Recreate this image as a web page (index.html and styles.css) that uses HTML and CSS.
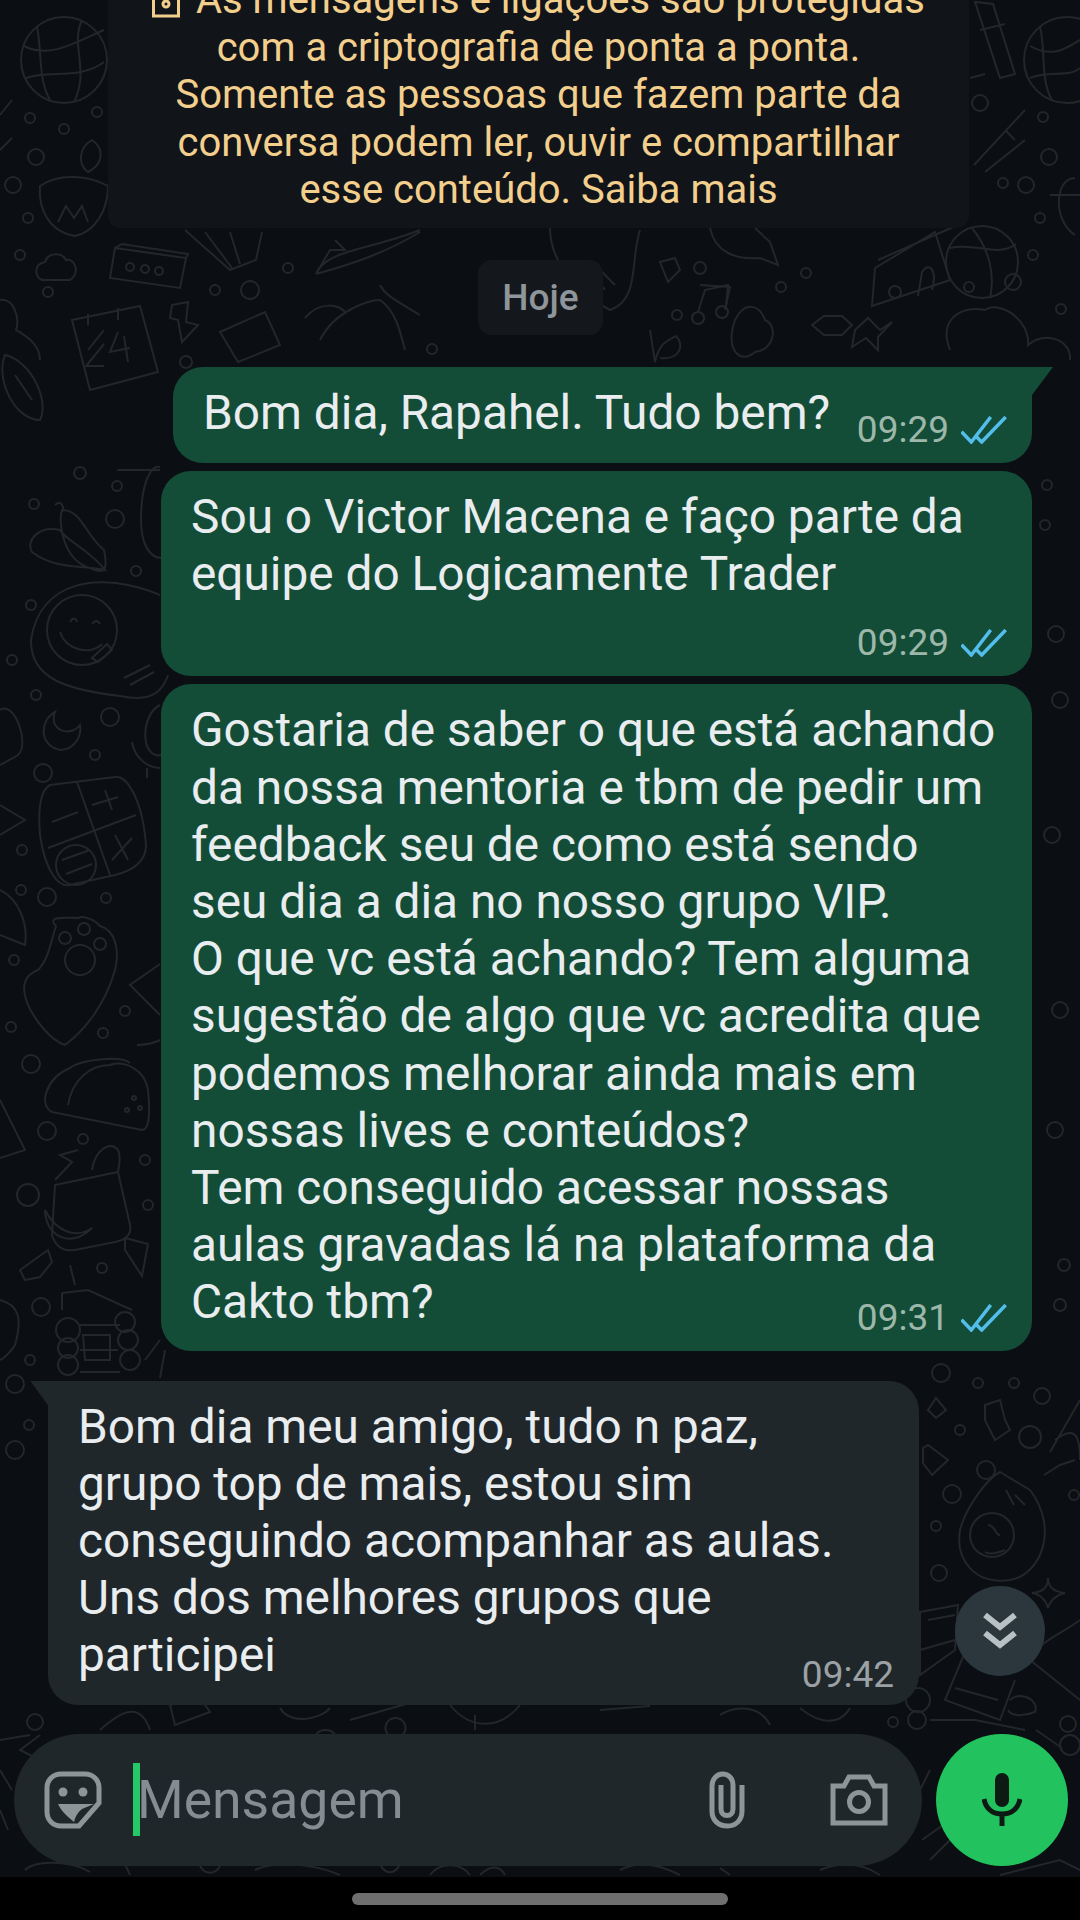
FILE: index.html
```html
<!DOCTYPE html>
<html lang="pt-BR">
<head>
    <meta charset="UTF-8">
    <meta name="viewport" content="width=device-width, initial-scale=1.0">
    <title>Conversa</title>
    <link rel="stylesheet" href="styles.css">
</head>
<body>
    <div class="screen">
        <div class="chat">
            <!-- wallpaper doodles, drawn in screen coordinates -->
            <svg class="wallpaper" viewBox="0 0 1080 1877" width="1080" height="1877" aria-hidden="true">
                <g id="dots">
                    <circle cx="30" cy="118" r="5"/><circle cx="64" cy="129" r="5"/><circle cx="97" cy="112" r="5"/><circle cx="36" cy="157" r="8"/><circle cx="13" cy="185" r="8"/><circle cx="28" cy="218" r="5"/><circle cx="20" cy="255" r="5"/><circle cx="48" cy="292" r="5"/><circle cx="215" cy="290" r="5"/><circle cx="250" cy="290" r="9"/><circle cx="288" cy="268" r="5"/><circle cx="186" cy="362" r="6"/><circle cx="432" cy="349" r="5"/>
                    <circle cx="980" cy="103" r="8"/><circle cx="1043" cy="117" r="5"/><circle cx="1049" cy="157" r="8"/><circle cx="1003" cy="183" r="5"/><circle cx="1026" cy="185" r="8"/><circle cx="1040" cy="218" r="5"/><circle cx="1033" cy="255" r="5"/><circle cx="1013" cy="282" r="8"/><circle cx="969" cy="287" r="5"/><circle cx="1061" cy="309" r="5"/><circle cx="700" cy="268" r="6"/><circle cx="806" cy="273" r="5"/><circle cx="781" cy="287" r="5"/><circle cx="677" cy="315" r="5"/>
                    <circle cx="80" cy="473" r="6"/><circle cx="117" cy="486" r="5"/><circle cx="34" cy="504" r="5"/><circle cx="115" cy="519" r="9"/><circle cx="31" cy="605" r="5"/><circle cx="136" cy="571" r="5"/><circle cx="12" cy="660" r="5"/><circle cx="36" cy="695" r="5"/><circle cx="110" cy="717" r="9"/><circle cx="95" cy="755" r="5"/><circle cx="43" cy="773" r="9"/><circle cx="22" cy="850" r="5"/><circle cx="21" cy="890" r="5"/><circle cx="47" cy="897" r="9"/><circle cx="106" cy="898" r="5"/>
                    <circle cx="14" cy="960" r="5"/><circle cx="11" cy="1027" r="5"/><circle cx="125" cy="1011" r="5"/><circle cx="103" cy="1033" r="5"/><circle cx="31" cy="1064" r="9"/><circle cx="47" cy="1131" r="9"/><circle cx="83" cy="1139" r="5"/><circle cx="145" cy="1160" r="5"/><circle cx="28" cy="1195" r="11"/><circle cx="148" cy="1205" r="5"/><circle cx="102" cy="1268" r="5"/><circle cx="41" cy="1307" r="9"/><circle cx="29" cy="1425" r="5"/><circle cx="30" cy="1360" r="5"/><circle cx="15" cy="1384" r="9"/><circle cx="15" cy="1450" r="9"/>
                    <circle cx="941" cy="1373" r="9"/><circle cx="978" cy="1383" r="5"/><circle cx="1014" cy="1383" r="5"/><circle cx="1042" cy="1396" r="8"/><circle cx="960" cy="1430" r="5"/><circle cx="1030" cy="1437" r="11"/><circle cx="986" cy="1470" r="9"/><circle cx="952" cy="1494" r="9"/><circle cx="936" cy="1526" r="5"/><circle cx="1074" cy="1495" r="5"/><circle cx="939" cy="1573" r="8"/>
                    <circle cx="1047" cy="485" r="5"/><circle cx="1045" cy="525" r="5"/><circle cx="1056" cy="634" r="8"/><circle cx="1060" cy="700" r="8"/><circle cx="1052" cy="835" r="8"/><circle cx="1060" cy="1010" r="8"/><circle cx="1055" cy="1130" r="8"/><circle cx="1060" cy="1305" r="6"/><circle cx="1064" cy="1265" r="6"/>
                    <circle cx="35" cy="1722" r="8"/><circle cx="893" cy="1722" r="5"/><circle cx="1068" cy="1724" r="8"/><circle cx="917" cy="1720" r="9"/>
                </g>
                <!-- globes -->
                <circle cx="64" cy="60" r="43"/><path d="M37 27C42 50 38 80 50 100M82 20C70 45 90 70 74 102M24 46C50 60 80 40 104 30M26 78C50 70 80 80 104 62"/>
                <circle cx="1067" cy="60" r="43"/><path d="M1040 27C1046 50 1040 80 1052 100M1030 46C1055 60 1070 45 1080 40M1030 78C1050 70 1070 78 1080 68"/>
                <!-- candle bowl -->
                <path d="M92 140C78 148 78 165 88 172C102 165 106 150 92 140ZM40 186C60 172 90 176 108 186C108 210 95 232 75 236C50 232 38 210 40 186ZM58 222L66 206L74 218L82 206L88 222"/>
                <!-- cloud and card -->
                <path d="M42 280C34 276 34 264 45 262C48 252 62 252 66 260C76 258 80 274 70 280Z"/>
                <path d="M115 248L186 258L180 288L110 278ZM115 248L122 244L188 254L186 258"/><circle cx="130" cy="267" r="4"/><circle cx="145" cy="269" r="4"/><circle cx="159" cy="271" r="4"/>
                <!-- calendar 24 -->
                <path d="M72 320L140 306L158 372L90 390Z M88 314V325M118 308V320"/><path d="M88 350L104 330M104 366H86L104 344M118 332L110 352L130 348M124 336L128 362"/>
                <path d="M0 300C14 298 20 318 16 330C26 336 40 344 40 360"/>
                <path d="M172 305L188 302L186 322L198 325L182 342L178 320L170 318Z"/>
                <path d="M220 332L265 312L280 345L238 362Z"/>
                <!-- balloon, feather, hut -->
                <path d="M185 230L230 270L256 260L262 232M205 232L232 268M230 232L240 264"/>
                <path d="M316 274C325 250 370 250 420 230M316 274C360 262 390 250 420 232M316 274L330 250L345 250L335 240"/>
                <path d="M320 340C335 310 370 300 380 300C395 310 400 330 405 350M305 318C320 300 340 305 345 312M380 285C385 295 395 300 420 315"/>
                <path d="M550 228C550 270 590 300 610 310C640 300 630 260 640 230M590 270L605 290M600 270L615 285"/>
                <path d="M660 262L675 258L680 270L668 282ZM700 285L730 287L725 310"/>
                <path d="M710 228C715 252 735 260 760 258L778 265L770 242L755 228"/>
                <path d="M698 312L705 290L728 285L726 306M698 312a6 6 0 1 0 .1 0ZM722 306a6 6 0 1 0 .1 0Z"/>
                <path d="M650 330L655 362C660 340 670 340 676 336C685 345 680 360 660 358"/>
                <path d="M735 320C745 300 760 305 765 320C778 325 775 350 755 352C740 365 725 350 735 320Z"/>
                <path d="M812 325L824 316H842L852 325L842 335H824Z"/>
                <path d="M855 330L868 318L880 330L892 322L878 337L878 350L866 338L852 347Z"/>
                <path d="M875 268L935 232L950 280L872 306ZM878 260L960 224M918 296L922 272C928 262 938 268 932 290"/>
                <circle cx="895" cy="292" r="6"/>
                <circle cx="982" cy="262" r="36"/><path d="M950 350C938 320 960 305 985 310C1000 300 1030 320 1028 345C1045 330 1072 340 1070 360M950 248C975 242 998 258 1016 244M972 228C990 250 995 275 990 298"/>
                <path d="M1075 178C1055 178 1052 220 1075 235M1050 195H1080"/>
                <path d="M975 2L1000 78L1015 74L993 4ZM980 30L1005 24M970 78L985 74"/>
                <path d="M974 165L1025 110M985 172L1025 140M1005 130L1015 140"/>
                <path d="M0 115L12 100M0 150L12 138"/>
                <path d="M5 355C-5 380 15 420 40 420C50 400 30 360 5 355ZM15 375L32 400"/>
                <!-- chillies, smile, moon, calculator -->
                <path d="M60 530C40 525 25 540 32 552C55 570 85 565 105 570C90 550 65 540 60 530ZM62 510C58 520 62 560 90 568C105 575 108 570 104 550C85 535 82 510 62 510ZM55 505C60 500 65 505 62 512"/>
                <path d="M120 470C110 470 140 470 160 470M160 467C150 465 141 485 141 520C141 545 150 558 162 558"/>
                <path d="M160 595C100 570 40 580 31 640C30 680 70 690 120 696C140 700 160 700 168 675"/>
                <circle cx="82" cy="630" r="35"/><path d="M60 632C66 650 90 656 102 644M70 622C73 617 76 618 77 622M92 624C95 620 98 620 100 624M92 658L107 644L112 650L98 662Z"/>
                <path d="M124 678L150 665M130 685L154 672"/>
                <path d="M55 712C40 720 38 745 60 750C75 750 82 735 80 725C70 738 48 730 55 712Z"/>
                <path d="M0 710C15 700 30 745 18 755C10 760 5 762 0 765"/>
                <path d="M160 705C140 715 140 760 162 755M132 742C135 760 150 768 160 768M147 768V778"/>
                <path d="M50 785L115 777C125 775 142 795 146 845C146 860 135 870 115 875L70 885C58 888 45 870 40 835C38 810 40 790 50 785ZM77 782L110 875M48 848L136 815M92 805L118 797M105 790L112 810M52 822L78 812M115 835L128 860M112 860L132 838"/>
                <circle cx="76" cy="865" r="20"/><path d="M62 860L90 850M66 874L92 864"/>
                <path d="M0 805L25 820L0 835"/>
                <path d="M0 890C20 900 28 925 25 945L0 935"/>
                <!-- paw, taco, bag, house -->
                <path d="M56 926C45 915 70 918 78 918C84 915 95 920 100 926C115 930 120 950 115 970C105 1005 85 1030 65 1045C50 1040 35 1020 28 1005C20 985 25 975 38 970C48 960 50 945 56 926Z"/>
                <circle cx="65" cy="938" r="6"/><circle cx="84" cy="929" r="6"/><circle cx="100" cy="944" r="6"/><circle cx="80" cy="960" r="15"/>
                <path d="M160 964L130 985L160 1015M137 1045C150 1045 160 1040 160 1040"/>
                <path d="M52 1112L142 1130C150 1130 150 1110 148 1090C145 1070 125 1060 110 1065C90 1065 72 1080 68 1105M52 1112C38 1105 46 1078 70 1068C80 1060 120 1055 130 1063"/>
                <circle cx="134" cy="1098" r="2"/><circle cx="127" cy="1110" r="2"/><circle cx="140" cy="1108" r="2"/>
                <path d="M0 1100L25 1150L0 1158"/>
                <path d="M55 1185L118 1172L130 1225C132 1235 125 1240 115 1242L75 1250C62 1252 55 1245 52 1235ZM55 1180L72 1162L60 1155L78 1150M92 1170C95 1150 110 1140 118 1150C122 1158 118 1170 118 1172"/>
                <path d="M45 1210C45 1235 70 1250 92 1228C75 1240 55 1230 45 1210Z"/>
                <path d="M125 1238L148 1244L142 1276L125 1250Z"/>
                <path d="M20 1270L48 1250L52 1262L40 1277L25 1280Z"/>
                <path d="M62 1293L88 1290L132 1310M62 1293V1310M70 1265L75 1285"/>
                <circle cx="68" cy="1330" r="12"/><circle cx="68" cy="1348" r="10"/><circle cx="68" cy="1365" r="10"/><circle cx="125" cy="1322" r="10"/><circle cx="128" cy="1340" r="10"/><circle cx="130" cy="1360" r="10"/>
                <path d="M80 1325H120M80 1350H118M80 1372H120M83 1335H110V1360H85Z"/>
                <path d="M0 1300C20 1305 22 1320 15 1345C12 1350 5 1358 0 1360"/>
                <path d="M160 1340L145 1360M165 1350L160 1378"/>
                <!-- avocado and friends on the right -->
                <path d="M1000 1472L1030 1490C1060 1530 1040 1575 1010 1580C975 1585 955 1560 960 1530C965 1510 985 1480 1000 1472Z"/>
                <circle cx="992" cy="1535" r="22"/><path d="M1006 1490L1014 1505M1015 1495L1025 1505M988 1525C995 1525 995 1535 1000 1535M985 1552C990 1555 1000 1552 1005 1550"/>
                <path d="M1044 1475L1060 1465L1075 1460M1050 1452L1080 1400M1055 1440C1075 1425 1080 1435 1080 1460"/>
                <path d="M985 1405L1000 1400L1005 1420L1010 1430L995 1440L985 1420Z"/>
                <path d="M928 1410L936 1398L946 1410L936 1418ZM923 1448L928 1445L948 1460L932 1475L923 1463Z"/>
                <path d="M1048 1578C1048 1590 1058 1592 1065 1593C1058 1594 1050 1600 1048 1608C1046 1600 1040 1594 1032 1593C1040 1592 1048 1590 1048 1578Z"/>
                <path d="M920 1612L958 1605L955 1650L920 1675ZM928 1620L955 1615M955 1640L920 1650"/>
                <path d="M965 1652L945 1700L1000 1720L1015 1680M955 1688L998 1700"/>
                <path d="M1030 1660L1080 1700M1080 1620C1060 1635 1040 1640 1030 1660"/>
                <circle cx="918" cy="1700" r="12"/>
                <path d="M930 1720H975L1025 1730M1010 1700C1020 1690 1040 1700 1035 1712C1028 1715 1012 1718 1008 1710"/>
                <path d="M1036 1730L1062 1748M1010 1737V1760"/>
                <path d="M1000 1875L1060 1860L1080 1870M922 1840L950 1820M950 1840L930 1860"/>
                <path d="M930 1770L920 1790"/>
                <circle cx="1070" cy="1745" r="10"/>
                <path d="M100 1730C120 1712 140 1700 150 1730M170 1705L175 1725L210 1712L200 1698ZM280 1708C290 1725 320 1720 330 1708M325 1730a12 12 0 1 0 1 0ZM350 1720L420 1700M395 1718a10 10 0 1 0 1 0ZM450 1705C470 1730 500 1730 520 1705M475 1715V1730"/>
                <path d="M0 1740L30 1735M40 1735L20 1750L40 1760M0 1770L12 1790M0 1810L8 1830"/>
                <path d="M25 1870C35 1860 70 1860 90 1872M125 1864L130 1875M200 1866C205 1875 215 1875 220 1866M255 1870C270 1862 310 1862 340 1875M380 1864C385 1875 395 1875 400 1864M430 1875C440 1862 460 1862 470 1875M480 1875C490 1865 500 1865 505 1875"/>
                <path d="M600 1710L650 1706M720 1715C735 1705 760 1705 770 1725M800 1708C820 1725 840 1725 850 1708M620 1870C640 1860 660 1865 680 1875M720 1868L730 1875M820 1870C840 1862 860 1862 880 1875"/>
            </svg>

            <div class="notice">
                <svg class="lock" viewBox="0 0 28 30" width="28" height="30"><path d="M1.500 8H26.500V27H1.500Z"/><circle cx="14" cy="15" r="3"/></svg>
                As mensagens e ligações são protegidas<br>
                com a criptografia de ponta a ponta.<br>
                Somente as pessoas que fazem parte da<br>
                conversa podem ler, ouvir e compartilhar<br>
                esse conteúdo. Saiba mais
            </div>

            <div class="date-chip">Hoje</div>

            <div class="bubble out first">
                <div class="bubble-row">
                    <div class="text">Bom dia, Rapahel. Tudo bem?</div>
                    <div class="meta">09:29
                        <svg class="ticks" viewBox="0 0 46 28" width="46" height="28"><path d="M.5 15.7L10.3 26L29.7 1M14.7 20L20.7 26L44.7 1"/></svg>
                    </div>
                </div>
            </div>

            <div class="bubble out">
                <div class="text">Sou o Victor Macena e faço parte da<br>equipe do Logicamente Trader</div>
                <div class="meta below">09:29
                    <svg class="ticks" viewBox="0 0 46 28" width="46" height="28"><path d="M.5 15.7L10.3 26L29.7 1M14.7 20L20.7 26L44.7 1"/></svg>
                </div>
            </div>

            <div class="bubble out">
                <div class="text">Gostaria de saber o que está achando<br>da nossa mentoria e tbm de pedir um<br>feedback seu de como está sendo<br>seu dia a dia no nosso grupo VIP.<br>O que vc está achando? Tem alguma<br>sugestão de algo que vc acredita que<br>podemos melhorar ainda mais em<br>nossas lives e conteúdos?<br>Tem conseguido acessar nossas<br>aulas gravadas lá na plataforma da<br>Cakto tbm?</div>
                <div class="meta overlap">09:31
                    <svg class="ticks" viewBox="0 0 46 28" width="46" height="28"><path d="M.5 15.7L10.3 26L29.7 1M14.7 20L20.7 26L44.7 1"/></svg>
                </div>
            </div>

            <div class="bubble in">
                <div class="text">Bom dia meu amigo, tudo n paz,<br>grupo top de mais, estou sim<br>conseguindo acompanhar as aulas.<br>Uns dos melhores grupos que<br>participei</div>
                <div class="meta overlap-in">09:42</div>
            </div>

            <div class="scroll-down">
                <svg viewBox="0 0 36 38" width="36" height="38"><path d="M3 3L18 15L33 3M3 21L18 33L33 21"/></svg>
            </div>

            <div class="composer">
                <div class="input-bar">
                    <svg class="sticker" viewBox="0 0 58 58" width="58" height="58">
                        <path class="line" d="M17 3H41C49 3 55 9 55 17V32L35 55H17C9 55 3 49 3 41V17C3 9 9 3 17 3Z"/>
                        <circle class="fill" cx="19" cy="21" r="4.5"/><circle class="fill" cx="39" cy="21" r="4.5"/>
                        <path class="fill" d="M14 33H50L38 38C34 41 31 46 30 51C24 46 17 40 14 33Z"/>
                    </svg>
                    <span class="caret"></span>
                    <span class="placeholder">Mensagem</span>
                    <svg class="clip" viewBox="0 0 36 58" width="36" height="58"><path d="M33 14V40C33 49 27 55 18.500 55C9 55 3 49 3 40V15C3 8 8 3 13.500 3C20 3 24 8 24 14V38C24 42 21.500 44.500 18 44.500C14.500 44.500 12 42 12 38V14"/></svg>
                    <svg class="camera" viewBox="0 0 58 52" width="58" height="52"><path d="M3 12H14L19 3H39L44 12H55V49H3Z"/><circle cx="29" cy="28" r="9.500"/></svg>
                </div>
                <div class="mic">
                    <svg viewBox="0 0 40 54" width="40" height="54"><rect x="13" y="0" width="14" height="34" rx="7"/><path d="M2 26C4 36 11 41 20 41C29 41 36 36 38 26M20 41V53"/></svg>
                </div>
            </div>
        </div>
        <div class="nav-bar"><span class="handle"></span></div>
    </div>
</body>
</html>
```

FILE: styles.css
```css
* {
    box-sizing: border-box;
}

html,
body {
    margin: 0;
    padding: 0;
    background-color: #000;
}

body {
    font-family: Roboto, "Noto Sans", sans-serif;
    color: #e9edef;
}

.screen {
    width: 1080px;
    height: 1920px;
    overflow: hidden;
    display: flex;
    flex-direction: column;
}

.chat {
    position: relative;
    height: 1877px;
    overflow: hidden;
    display: flex;
    flex-direction: column;
    background-color: #0b0e12;
}

.wallpaper {
    position: absolute;
    left: 0;
    top: 0;
    fill: none;
    stroke: #23272a;
    stroke-width: 2;
}

.notice {
    position: relative;
    width: 861px;
    margin: -36px 0 0 108px;
    padding: 12px 0 14px;
    background-color: #111519;
    border-radius: 12px;
    color: #f3cf8e;
    font-size: 40px;
    line-height: 47.6px;
    text-align: center;
    white-space: nowrap;
}

.lock {
    vertical-align: -6px;
    margin-right: 6px;
    fill: none;
    stroke: #f3cf8e;
    stroke-width: 3;
}

.date-chip {
    position: relative;
    align-self: flex-start;
    width: 125px;
    height: 75px;
    margin: 32px 0 0 478px;
    background-color: #14181c;
    border-radius: 14px;
    color: #8f959b;
    font-size: 37px;
    font-weight: 500;
    line-height: 75px;
    text-align: center;
}

.bubble {
    position: relative;
    width: 871px;
    padding: 18px 25px 13px 30px;
    border-radius: 30px;
    font-size: 47.8px;
    line-height: 57.2px;
    white-space: nowrap;
}

.out {
    align-self: flex-end;
    margin: 8px 48px 0 0;
    background-color: #134d37;
}

.first {
    width: 859px;
    margin-top: 32px;
    border-top-right-radius: 0;
}

.first::after {
    content: "";
    position: absolute;
    top: 0;
    right: -21px;
    width: 21px;
    height: 28px;
    background-color: #134d37;
    clip-path: polygon(0 0, 100% 0, 0 100%);
}

.in {
    align-self: flex-start;
    margin: 30px 0 0 48px;
    padding-bottom: 10px;
    background-color: #1f272a;
    border-top-left-radius: 0;
}

.in::before {
    content: "";
    position: absolute;
    top: 0;
    left: -18px;
    width: 18px;
    height: 25px;
    background-color: #1f272a;
    clip-path: polygon(0 0, 100% 0, 100% 100%);
}

.bubble-row {
    display: flex;
    justify-content: space-between;
    height: 65px;
}

.meta {
    display: flex;
    align-items: center;
    justify-content: flex-end;
    gap: 12px;
    height: 40px;
    color: #9db8aa;
    font-size: 37px;
    line-height: 40px;
}

.bubble-row .meta {
    align-self: flex-end;
}

.below {
    margin-top: 20px;
}

.overlap {
    margin-top: -34px;
}

.overlap-in {
    margin-top: -30px;
    color: #9ba1a5;
}

.ticks {
    fill: none;
    stroke: #53bdeb;
    stroke-width: 3.5;
}

.scroll-down {
    position: absolute;
    left: 955px;
    top: 1586px;
    width: 90px;
    height: 90px;
    display: flex;
    align-items: center;
    justify-content: center;
    background-color: #2b363d;
    border-radius: 50%;
    fill: none;
    stroke: #b7c1c6;
    stroke-width: 6;
}

.composer {
    position: relative;
    display: flex;
    gap: 14px;
    margin: 29px 0 0 14px;
}

.input-bar {
    display: flex;
    align-items: center;
    width: 908px;
    height: 132px;
    padding-left: 30px;
    background-color: #1f272a;
    border-radius: 66px;
}

.sticker {
    flex: none;
}

.sticker .line {
    fill: none;
    stroke: #8d9599;
    stroke-width: 5;
}

.sticker .fill {
    fill: #8d9599;
}

.caret {
    flex: none;
    width: 7px;
    height: 73px;
    margin-left: 31px;
    background-color: #25c866;
}

.placeholder {
    width: 515px;
    margin-left: -3px;
    color: #868d92;
    font-size: 53.5px;
}

.clip {
    flex: none;
    margin-left: 57px;
    fill: none;
    stroke: #8d9599;
    stroke-width: 5;
}

.camera {
    flex: none;
    margin-left: 85px;
    fill: none;
    stroke: #8d9599;
    stroke-width: 5;
}

.mic {
    width: 132px;
    height: 132px;
    display: flex;
    align-items: center;
    justify-content: center;
    background-color: #22c25f;
    border-radius: 50%;
}

.mic svg {
    fill: #0c1a13;
    stroke: #0c1a13;
    stroke-width: 0;
}

.mic path {
    fill: none;
    stroke-width: 5;
}

.nav-bar {
    flex: 1;
    display: flex;
    align-items: center;
    justify-content: center;
    background-color: #000;
}

.handle {
    width: 376px;
    height: 12px;
    background-color: #6f6f6f;
    border-radius: 6px;
}
```
